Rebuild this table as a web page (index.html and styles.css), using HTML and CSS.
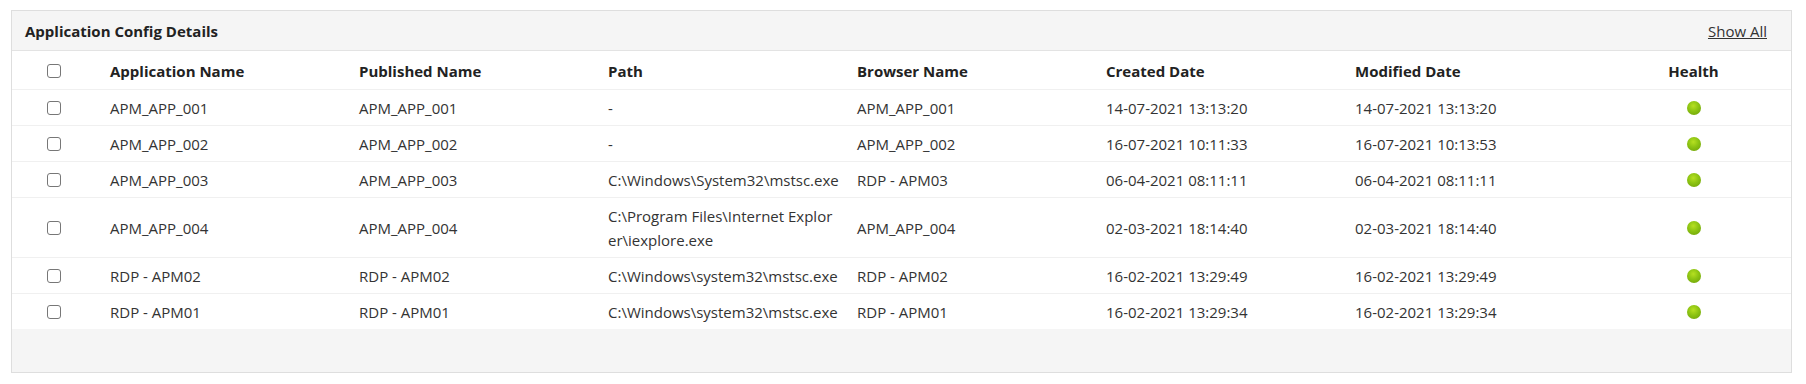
FILE: index.html
```html
<!DOCTYPE html>
<html lang="en">
  <head>
    <meta charset="UTF-8" />
    <meta name="viewport" content="width=device-width, initial-scale=1.0" />
    <title>Application Config Details</title>
    <link rel="stylesheet" href="styles.css">
  </head>
  <body>
    <!-- config panel -->
    <div class="config-panel">
      <!-- panel title bar -->
      <div class="panel-head">
        <h2 class="panel-title">Application Config Details</h2>
        <a href="#" class="show-all">Show All</a>
      </div>
      <!-- the table of applications -->
      <table class="config-table">
        <colgroup>
          <col class="col-check" />
          <col class="col-text" />
          <col class="col-text" />
          <col class="col-text" />
          <col class="col-text" />
          <col class="col-text" />
          <col class="col-text" />
          <col />
        </colgroup>
        <thead>
          <tr>
            <th class="check-cell"><span class="box"></span></th>
            <th>Application Name</th>
            <th>Published Name</th>
            <th class="path-cell">Path</th>
            <th>Browser Name</th>
            <th>Created Date</th>
            <th>Modified Date</th>
            <th class="health-cell">Health</th>
          </tr>
        </thead>
        <tbody>
          <tr>
            <td class="check-cell"><span class="box"></span></td>
            <td>APM_APP_001</td>
            <td>APM_APP_001</td>
            <td class="path-cell">-</td>
            <td>APM_APP_001</td>
            <td>14-07-2021 13:13:20</td>
            <td>14-07-2021 13:13:20</td>
            <td class="health-cell"><span class="dot"></span></td>
          </tr>
          <tr>
            <td class="check-cell"><span class="box"></span></td>
            <td>APM_APP_002</td>
            <td>APM_APP_002</td>
            <td class="path-cell">-</td>
            <td>APM_APP_002</td>
            <td>16-07-2021 10:11:33</td>
            <td>16-07-2021 10:13:53</td>
            <td class="health-cell"><span class="dot"></span></td>
          </tr>
          <tr>
            <td class="check-cell"><span class="box"></span></td>
            <td>APM_APP_003</td>
            <td>APM_APP_003</td>
            <td class="path-cell">C:\Windows\System32\mstsc.exe</td>
            <td>RDP - APM03</td>
            <td>06-04-2021 08:11:11</td>
            <td>06-04-2021 08:11:11</td>
            <td class="health-cell"><span class="dot"></span></td>
          </tr>
          <tr>
            <td class="check-cell"><span class="box"></span></td>
            <td>APM_APP_004</td>
            <td>APM_APP_004</td>
            <!-- long path wraps inside the word, like the source grid -->
            <td class="path-cell">C:\Program Files\Internet Explor<br />er\iexplore.exe</td>
            <td>APM_APP_004</td>
            <td>02-03-2021 18:14:40</td>
            <td>02-03-2021 18:14:40</td>
            <td class="health-cell"><span class="dot"></span></td>
          </tr>
          <tr>
            <td class="check-cell"><span class="box"></span></td>
            <td>RDP - APM02</td>
            <td>RDP - APM02</td>
            <td class="path-cell">C:\Windows\system32\mstsc.exe</td>
            <td>RDP - APM02</td>
            <td>16-02-2021 13:29:49</td>
            <td>16-02-2021 13:29:49</td>
            <td class="health-cell"><span class="dot"></span></td>
          </tr>
          <tr>
            <td class="check-cell"><span class="box"></span></td>
            <td>RDP - APM01</td>
            <td>RDP - APM01</td>
            <td class="path-cell">C:\Windows\system32\mstsc.exe</td>
            <td>RDP - APM01</td>
            <td>16-02-2021 13:29:34</td>
            <td>16-02-2021 13:29:34</td>
            <td class="health-cell"><span class="dot"></span></td>
          </tr>
        </tbody>
      </table>
    </div>
  </body>
</html>
```

FILE: styles.css
```css
/* removing default styling */
* {
  margin: 0;
  padding: 0;
  box-sizing: border-box;
}
/* page */
body {
  background-color: #fff;
  font-family: "Open Sans", "Liberation Sans", sans-serif;
  font-size: 15px;
  color: #333;
  padding: 10px 14px 0 11px;
}
/* the outer panel */
.config-panel {
  border: 1px solid #dedede;
  background-color: #f5f5f5;
  height: 363px;
}
/* title bar */
.panel-head {
  display: flex;
  justify-content: space-between;
  align-items: center;
  height: 40px;
  padding: 0 24px 0 13px;
  border-bottom: 1px solid #e3e3e3;
}
.panel-title {
  font-size: 15px;
  font-weight: 700;
  color: #222;
}
.show-all {
  color: #333;
  text-decoration: underline;
}
/* table styling */
.config-table {
  width: 100%;
  border-collapse: collapse;
  table-layout: fixed;
  background-color: #fff;
}
.col-check {
  width: 98px;
}
.col-text {
  width: 249px;
}
.config-table th,
.config-table td {
  text-align: left;
  vertical-align: middle;
  line-height: 24px;
  padding: 6px 19px 5px 0;
  word-break: break-all;
  border-bottom: 1px solid #f0f0f0;
}
.config-table th {
  font-weight: 700;
  color: #222;
  padding: 8px 19px 6px 0;
}
.config-table tbody tr:last-child td {
  border-bottom: none;
}
/* path column is a bit wider */
.config-table .path-cell {
  padding-right: 16px;
}
/* checkbox column */
.check-cell {
  padding-left: 35px !important;
}
.box {
  display: block;
  width: 14px;
  height: 14px;
  border: 1px solid #777;
  border-radius: 3px;
  background-color: #fff;
}
/* health column */
.config-table .health-cell {
  text-align: center;
  padding-right: 8px;
  padding-left: 0;
}
.dot {
  display: inline-block;
  width: 14px;
  height: 14px;
  border-radius: 50%;
  vertical-align: -1px;
  margin-top: -6px;
  background: radial-gradient(circle at 45% 35%, #b6e021 0%, #8cc312 45%, #6a9c08 100%);
}
```
